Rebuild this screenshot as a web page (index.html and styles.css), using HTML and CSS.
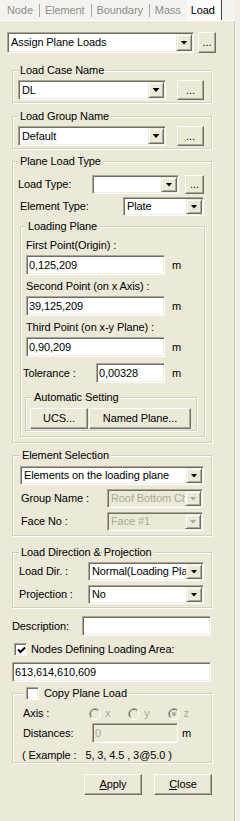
FILE: index.html
```html
<!DOCTYPE html>
<html lang="en">
<head>
  <meta charset="UTF-8" />
  <title>Assign Plane Loads</title>
  <link rel="stylesheet" href="styles.css">
</head>
<body>
  <svg class="defs" width="0" height="0">
    <symbol id="radio" viewBox="0 0 12 12">
      <circle cx="6" cy="6" r="5" fill="#ECE9D8"/>
      <path d="M9.9 2.1 A5.5 5.5 0 0 0 2.1 9.9" stroke="#ACA899" fill="none"/>
      <path d="M2.1 9.9 A5.5 5.5 0 0 0 9.9 2.1" stroke="#fff" fill="none"/>
      <path d="M9.2 2.8 A4.5 4.5 0 0 0 2.8 9.2" stroke="#716F64" fill="none"/>
      <path d="M2.8 9.2 A4.5 4.5 0 0 0 9.2 2.8" stroke="#F1EFE2" fill="none"/>
    </symbol>
  </svg>

  <div class="tabs">
    <span class="tab">Node</span><i class="sep"></i>
    <span class="tab">Element</span><i class="sep"></i>
    <span class="tab">Boundary</span><i class="sep"></i>
    <span class="tab">Mass</span>
    <span class="tab active">Load</span>
  </div>

  <div class="panel">
    <div class="row top-row">
      <div class="combo top-combo"><span class="val">Assign Plane Loads</span><span class="arrow"></span></div>
      <button class="btn top-dots">...</button>
    </div>

    <fieldset class="grp g-first">
      <legend>Load Case Name</legend>
      <div class="row">
        <div class="combo name-combo"><span class="val">DL</span><span class="arrow"></span></div>
        <button class="btn name-dots">...</button>
      </div>
    </fieldset>

    <fieldset class="grp g-second">
      <legend>Load Group Name</legend>
      <div class="row">
        <div class="combo name-combo"><span class="val">Default</span><span class="arrow"></span></div>
        <button class="btn name-dots">...</button>
      </div>
    </fieldset>

    <fieldset class="grp g-type">
      <legend>Plane Load Type</legend>
      <div class="row">
        <span class="lbl lbl-loadtype">Load Type:</span>
        <div class="combo loadtype-combo"><span class="val"></span><span class="arrow"></span></div>
        <button class="btn loadtype-dots">...</button>
      </div>
      <div class="row row-elem">
        <span class="lbl lbl-elemtype">Element Type:</span>
        <div class="combo elemtype-combo"><span class="val">Plate</span><span class="arrow"></span></div>
      </div>

      <fieldset class="grp g-plane">
        <legend>Loading Plane</legend>
        <div class="pt-label first">First Point(Origin) :</div>
        <div class="row pt-row">
          <input class="edit pt-edit" value="0,125,209"><span class="unit">m</span>
        </div>
        <div class="pt-label">Second Point (on x Axis) :</div>
        <div class="row pt-row">
          <input class="edit pt-edit" value="39,125,209"><span class="unit">m</span>
        </div>
        <div class="pt-label">Third Point (on x-y Plane) :</div>
        <div class="row pt-row">
          <input class="edit pt-edit" value="0,90,209"><span class="unit">m</span>
        </div>
        <div class="row tol-row">
          <span class="lbl lbl-tol">Tolerance :</span>
          <input class="edit tol-edit" value="0,00328"><span class="unit">m</span>
        </div>

        <fieldset class="grp g-auto">
          <legend>Automatic Setting</legend>
          <div class="row">
            <button class="btn ucs-btn">UCS...</button>
            <button class="btn named-btn">Named Plane...</button>
          </div>
        </fieldset>
      </fieldset>
    </fieldset>

    <fieldset class="grp g-select">
      <legend>Element Selection</legend>
      <div class="combo select-combo"><span class="val">Elements on the loading plane</span><span class="arrow"></span></div>
      <div class="row sel-row">
        <span class="lbl lbl-sel">Group Name :</span>
        <div class="combo off sel-combo"><span class="val">Roof Bottom Ch</span><span class="arrow"></span></div>
      </div>
      <div class="row sel-row">
        <span class="lbl lbl-sel">Face No :</span>
        <div class="combo off sel-combo"><span class="val">Face #1</span><span class="arrow"></span></div>
      </div>
    </fieldset>

    <fieldset class="grp g-dir">
      <legend>Load Direction &amp; Projection</legend>
      <div class="row">
        <span class="lbl lbl-dir">Load Dir. :</span>
        <div class="combo dir-combo"><span class="val">Normal(Loading Plane)</span><span class="arrow"></span></div>
      </div>
      <div class="row dir-row">
        <span class="lbl lbl-dir">Projection :</span>
        <div class="combo dir-combo"><span class="val">No</span><span class="arrow"></span></div>
      </div>
    </fieldset>

    <div class="row desc-row">
      <span class="lbl lbl-desc">Description:</span>
      <input class="edit desc-edit" value="">
    </div>

    <div class="row check-row">
      <span class="check">
        <svg width="9" height="9" viewBox="0 0 9 9"><path d="M1 3.5 L3.5 6 L8 1.5" stroke="#000" stroke-width="2" fill="none"/></svg>
      </span>
      <span class="check-text">Nodes Defining Loading Area:</span>
    </div>

    <input class="edit nodes-edit" value="613,614,610,609">

    <fieldset class="grp g-copy">
      <legend><span class="check"></span><span class="check-text copy-text">Copy Plane Load</span></legend>
      <div class="row axis-row">
        <span class="lbl lbl-copy">Axis :</span>
        <span class="radio-item"><svg class="radio" width="12" height="12"><use href="#radio"/></svg><span class="dim">x</span></span>
        <span class="radio-item"><svg class="radio" width="12" height="12"><use href="#radio"/></svg><span class="dim">y</span></span>
        <span class="radio-item"><svg class="radio" width="12" height="12"><use href="#radio"/><circle cx="6" cy="6" r="2" fill="#ACA899"/></svg><span class="dim">z</span></span>
      </div>
      <div class="row dist-row">
        <span class="lbl lbl-copy">Distances:</span>
        <input class="edit off dist-edit" value="0" disabled><span class="unit dist-unit">m</span>
      </div>
      <div class="example">( Example :   5, 3, 4.5 , 3@5.0 )</div>
    </fieldset>

    <div class="row actions">
      <button class="btn act-btn"><u>A</u>pply</button>
      <button class="btn act-btn"><u>C</u>lose</button>
    </div>
  </div>
</body>
</html>
```

FILE: styles.css
```css
* {
  box-sizing: border-box;
}
body {
  margin: 0;
  width: 240px;
  min-height: 821px;
  background-color: #f1efe6;
  font-family: 'Liberation Sans', Arial, sans-serif;
  font-size: 11px;
  line-height: 13px;
  letter-spacing: -0.1px;
  color: #000;
}
.defs {
  position: absolute;
}
.row {
  display: flex;
  align-items: center;
}

/* tab strip */
.tabs {
  display: flex;
  height: 21px;
  padding-left: 7px;
  background-color: #f4f3ee;
  border-bottom: 1px solid #fff;
  color: #8e8e8e;
  width: 235px;
}
.tab {
  display: flex;
  align-items: center;
  padding-top: 1px;
}
.sep {
  width: 1px;
  height: 13px;
  align-self: center;
  margin: 1px 5px 0 6px;
  background-color: #a9a9a9;
}
.tab.active {
  color: #000;
  background-color: #fbfbf9;
  margin-left: 6px;
  padding: 1px 6px 0 4px;
  border-right: 1px solid #404040;
}

/* panel */
.panel {
  width: 235px;
  min-height: 800px;
  padding: 11px 0 0 12px;
  background-color: #ece9d8;
  border-right: 1px solid #cdc9b8;
}

/* controls */
.combo {
  display: flex;
  align-items: stretch;
  height: 20px;
  padding: 1px;
  background-color: #fff;
  border: 1px solid;
  border-color: #aca899 #fff #fff #aca899;
  box-shadow: inset 1px 1px #716f64, inset -1px -1px #f1efe2;
}
.combo .val {
  flex: 1;
  min-width: 0;
  padding-left: 2px;
  white-space: nowrap;
  overflow: hidden;
  display: flex;
  align-items: center;
}
.arrow {
  width: 16px;
  flex: none;
  display: flex;
  align-items: center;
  justify-content: center;
  background-color: #ece9d8;
  border: 1px solid;
  border-color: #ece9d8 #716f64 #716f64 #ece9d8;
  box-shadow: inset 1px 1px #fff, inset -1px -1px #aca899;
}
.arrow::after {
  content: "";
  width: 7px;
  height: 4px;
  background-color: #000;
  clip-path: polygon(0 0, 7px 0, 3.5px 4px);
}
.combo.off {
  background-color: #ece9d8;
  color: #aca899;
}
.combo.off .arrow::after {
  background-color: #aca899;
}
.edit {
  height: 20px;
  margin: 0;
  padding: 0 2px;
  font: inherit;
  letter-spacing: inherit;
  color: #000;
  background-color: #fff;
  border: 1px solid;
  border-color: #aca899 #fff #fff #aca899;
  box-shadow: inset 1px 1px #716f64, inset -1px -1px #f1efe2;
  outline: none;
}
.edit.off {
  background-color: #ece9d8;
  color: #aca899;
}
.btn {
  height: 20px;
  margin: 0;
  padding: 0;
  font: inherit;
  letter-spacing: inherit;
  color: #000;
  background-color: #ece9d8;
  border: 1px solid;
  border-color: #fff #716f64 #716f64 #fff;
  box-shadow: inset -1px -1px #aca899;
}
.unit {
  margin-left: 7px;
}

/* group boxes */
.grp {
  margin: 0;
  min-width: 0;
  width: 200px;
  padding: 3px 6px 2px 5px;
  border: 1px solid #d0d0bf;
  box-shadow: 1px 1px 0 #fff, inset 1px 1px 0 #fff;
}
.grp legend {
  padding: 0 2px;
  line-height: 13px;
  background-color: #ece9d8;
}

.top-row {
  margin-left: -5px;
}
.top-combo {
  width: 187px;
  height: 21px;
}
.top-dots {
  width: 18px;
  height: 21px;
  margin-left: 4px;
}

.g-first {
  margin-top: 11px;
}
.g-second {
  margin-top: 7px;
}
.name-combo {
  width: 148px;
}
.name-dots {
  width: 27px;
  margin-left: 11px;
}

.g-type {
  margin-top: 6px;
  padding: 7px 6px 5px 5px;
}
.g-type .combo,
.g-type .btn.loadtype-dots {
  height: 19px;
}
.lbl-loadtype {
  width: 74px;
}
.loadtype-combo {
  width: 87px;
}
.loadtype-dots {
  width: 19px;
  margin-left: 6px;
}
.row-elem {
  margin-top: 3px;
}
.lbl-elemtype {
  width: 105px;
  padding-left: 2px;
}
.elemtype-combo {
  width: 81px;
}

.g-plane {
  width: 185px;
  margin: 4px 0 0 2px;
  padding: 6px 5px 5px 5px;
}
.pt-label {
  margin-top: 5px;
}
.pt-label.first {
  margin-top: 0;
}
.pt-row {
  margin-top: 3px;
}
.pt-edit {
  width: 139px;
}
.tol-row {
  margin: 6px 0 0 -3px;
}
.lbl-tol {
  width: 73px;
}
.tol-edit {
  width: 69px;
}
.g-auto {
  width: 172px;
  margin: 8px 0 0 -1px;
  padding: 4px 4px 1px 4px;
}
.g-auto legend {
  margin-left: 2px;
}
.ucs-btn {
  width: 58px;
  height: 21px;
}
.named-btn {
  width: 102px;
  height: 21px;
  margin-left: 1px;
}

.g-select {
  margin-top: 6px;
  padding: 4px 6px 4px 7px;
}
.g-select .combo {
  height: 19px;
}
.select-combo {
  width: 184px;
}
.sel-row {
  margin-top: 4px;
}
.lbl-sel {
  width: 87px;
  padding-left: 1px;
}
.sel-combo {
  width: 96px;
}

.g-dir {
  margin-top: 10px;
  padding: 3px 6px 3px 6px;
}
.g-dir .combo {
  height: 19px;
}
.lbl-dir {
  width: 69px;
}
.dir-combo {
  width: 116px;
}
.dir-row {
  margin-top: 4px;
}

.desc-row {
  margin-top: 8px;
}
.lbl-desc {
  width: 70px;
}
.desc-edit {
  width: 129px;
}

.check-row {
  margin: 7px 0 0 2px;
}
.check {
  display: inline-flex;
  align-items: center;
  justify-content: center;
  width: 13px;
  height: 13px;
  vertical-align: top;
  background-color: #fff;
  border: 1px solid;
  border-color: #aca899 #fff #fff #aca899;
  box-shadow: inset 1px 1px #716f64, inset -1px -1px #f1efe2;
}
.check svg {
  margin: 1px 0 0 1px;
}
.check-text {
  margin-left: 4px;
}

.nodes-edit {
  display: block;
  width: 199px;
  margin-top: 6px;
}

.g-copy {
  margin-top: 5px;
  padding: 7px 6px 0 9px;
}
.g-copy legend {
  margin-left: 2px;
}
.copy-text {
  margin-left: 5px;
}
.lbl-copy {
  width: 68px;
  padding-left: 1px;
}
.radio-item {
  display: flex;
  align-items: center;
  width: 40px;
}
.radio-item:last-child {
  width: 38px;
}
.radio {
  margin-right: 4px;
}
.dim {
  color: #aca899;
}
.dist-row {
  margin-top: 3px;
}
.dist-row .lbl-copy {
  width: 70px;
}
.dist-edit {
  width: 86px;
}
.dist-unit {
  margin-left: 4px;
}
.example {
  margin-top: 6px;
  white-space: pre;
}

.actions {
  width: 200px;
  margin-top: 11px;
  justify-content: flex-end;
}
.act-btn {
  width: 58px;
  height: 21px;
  margin-left: 12px;
}
```
